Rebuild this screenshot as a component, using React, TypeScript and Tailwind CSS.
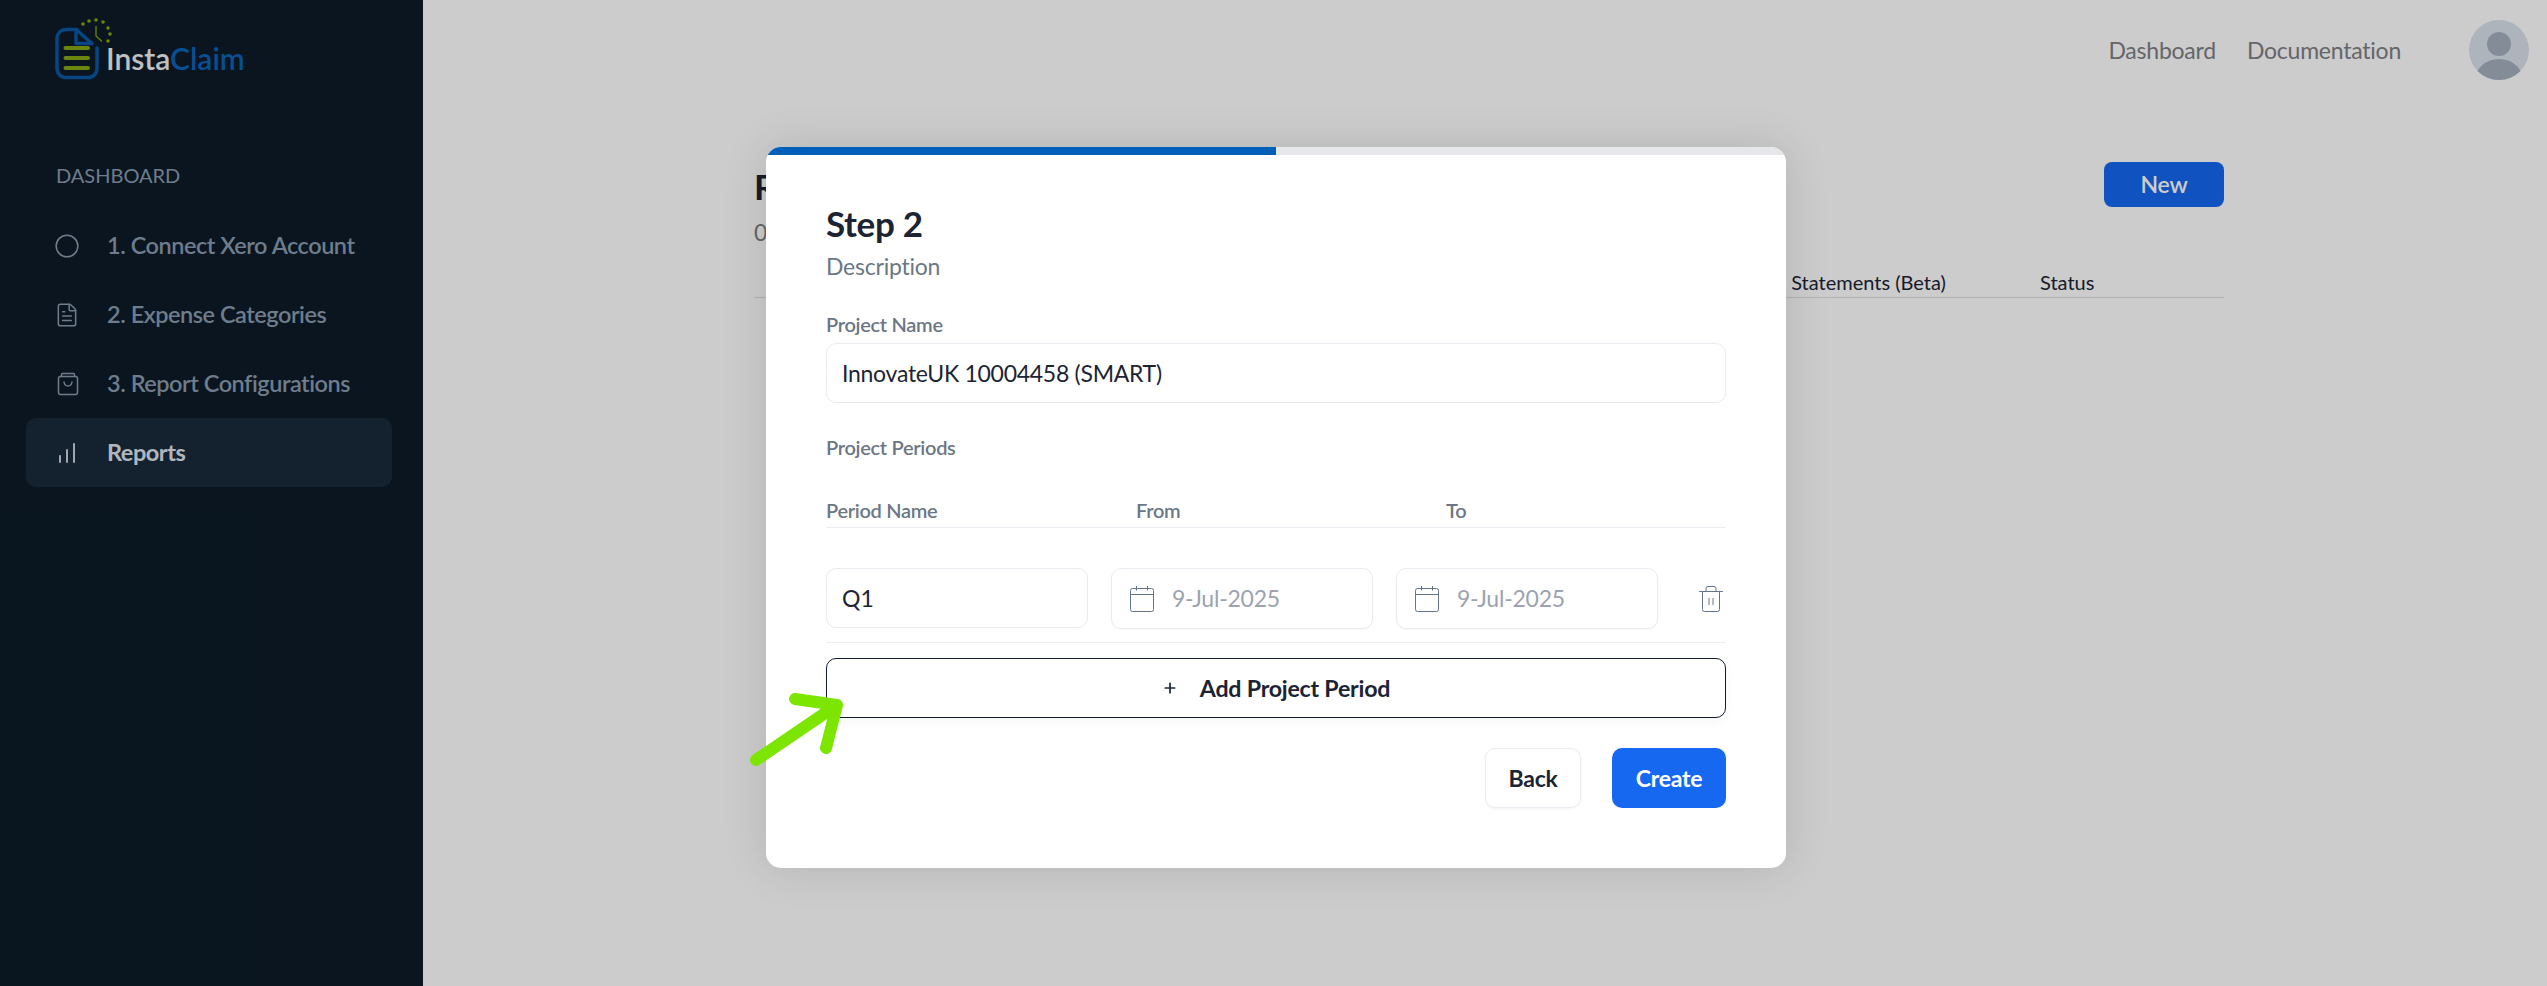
import { Circle, ChartNoAxesColumnIncreasing, FileText, Plus } from 'lucide-react';
import type { ReactNode } from 'react';

function Logo() {
  return (
    <div className="flex items-start">
      <svg width="64" height="70" viewBox="0 0 64 70" fill="none" className="shrink-0">
        <path
          d="M27 14.5H16a9 9 0 0 0-9 9V53a9 9 0 0 0 9 9.500H38a9 9 0 0 0 9-9.500V33"
          stroke="#0b57a4"
          strokeWidth="3.500"
          strokeLinecap="round"
        />
        <path d="M26 14.500 42 28.500H26Z" stroke="#0b57a4" strokeWidth="3.500" strokeLinejoin="round" />
        <path d="M15.500 33H38M15.500 43H38M15.500 53H38" stroke="#86a812" strokeWidth="4" strokeLinecap="round" />
        <g fill="#86a812">
          <circle cx="33" cy="9" r="1.800" />
          <circle cx="39" cy="6" r="1.800" />
          <circle cx="46" cy="5" r="1.800" />
          <circle cx="53" cy="7" r="1.800" />
          <circle cx="58" cy="13" r="1.800" />
          <circle cx="60" cy="19" r="1.800" />
          <circle cx="58" cy="26" r="1.800" />
        </g>
        <path d="M46 11V21L52 26.500" stroke="#86a812" strokeWidth="1.300" />
      </svg>
      <span className="-ml-[8px] mt-[25px] text-[30px] leading-[36px] font-semibold text-[#eef0f2]">
        Insta<span className="text-[#0b62b8]">Claim</span>
      </span>
    </div>
  );
}

function BagIcon() {
  return (
    <svg width="24" height="24" viewBox="0 0 24 24" fill="none" stroke="currentColor" strokeWidth="1.500">
      <rect x="2.500" y="4.500" width="19" height="18" rx="2" />
      <path d="M5 4.500 6 1.500H18L19 4.500" strokeLinejoin="round" />
      <path d="M8 10c.5 3 2.200 4 4 4s3.500-1 4-4" strokeLinecap="round" />
    </svg>
  );
}

function CalendarIcon() {
  return (
    <svg width="24" height="26" viewBox="0 0 24 26" fill="none" stroke="#64748b" strokeWidth="1" className="shrink-0">
      <rect x="0.500" y="2.500" width="23" height="23" rx="2" />
      <path d="M0.500 8.500H23.500M6.500 0V4.500M17.500 0V4.500" />
    </svg>
  );
}

function TrashIcon() {
  return (
    <svg
      width="24"
      height="26"
      viewBox="0 0 24 26"
      fill="none"
      stroke="#64748b"
      strokeWidth="1"
      className="mt-[18px] ml-[18px] shrink-0"
    >
      <path d="M0.500 5.500H23.500" strokeLinecap="round" />
      <path d="M7 5.500V2.500A2 2 0 0 1 9 0.500H15A2 2 0 0 1 17 2.500V5.500" />
      <path d="M3.500 5.500V23.500A2 2 0 0 0 5.500 25.500H18.500A2 2 0 0 0 20.500 23.500V5.500" />
      <path d="M10 12V19M14 12V19" />
    </svg>
  );
}

function NavItem({ icon, label, active }: { icon: ReactNode; label: string; active?: boolean }) {
  return (
    <div
      className={`mr-[31px] ml-[26px] flex h-[69px] items-center rounded-[10px] pl-[30px] text-[23.500px] tracking-[-0.02em] ${
        active ? 'bg-[#192b3b] font-bold text-[#dee4ee]' : 'font-semibold text-[#8a9bb0]'
      }`}
    >
      <span className="flex w-[51px] shrink-0 items-center">{icon}</span>
      {label}
    </div>
  );
}

function DateField() {
  return (
    <div className="flex h-[61px] w-[262px] shrink-0 items-center gap-[18px] rounded-[10px] border border-[#e8ebf0] pl-[18px] shadow-[0_1px_2px_rgba(0,0,0,0.03)]">
      <CalendarIcon />
      <input
        readOnly
        placeholder="9-Jul-2025"
        className="w-[150px] bg-transparent text-[23px] tracking-[-0.01em] outline-none placeholder:text-[#9ca3af]"
      />
    </div>
  );
}

function Modal() {
  return (
    <div className="w-[1020px] overflow-hidden rounded-[15px] bg-white shadow-[0_0_45px_rgba(0,0,0,0.12)]">
      <div className="h-[8px] bg-[#e5e7eb]">
        <div className="h-full w-1/2 bg-[#015eb9]" />
      </div>
      <div className="px-[60px] pt-[49px] pb-[60px] text-[#1c2434]">
        <h2 className="text-[35px] leading-[38px] font-bold tracking-[-0.01em]">Step 2</h2>
        <p className="mt-[11px] text-[23px] leading-[26px] tracking-[-0.01em] text-[#6b7785]">Description</p>

        <label className="mt-[32px] block text-[20px] leading-[26px] font-semibold tracking-[-0.015em] text-[#6b7785]">
          Project Name
        </label>
        <input
          readOnly
          defaultValue="InnovateUK 10004458 (SMART)"
          className="mt-[6px] h-[60px] w-full rounded-[10px] border border-[#e8ebf0] px-[15px] text-[23px] tracking-[-0.012em] outline-none"
        />

        <div className="mt-[31px] text-[20px] leading-[26px] font-semibold tracking-[-0.015em] text-[#6b7785]">
          Project Periods
        </div>

        <div className="mt-[37px] flex border-b border-[#e8ebf0] pb-[4px] text-[20px] leading-[26px] font-semibold tracking-[-0.015em] text-[#6b7785]">
          <span className="w-[310px]">Period Name</span>
          <span className="w-[310px]">From</span>
          <span>To</span>
        </div>

        <div className="mt-[40px] flex items-start gap-[23px] border-b border-[#eceef1] pb-[13px]">
          <input
            readOnly
            defaultValue="Q1"
            className="h-[60px] w-[262px] shrink-0 rounded-[10px] border border-[#e8ebf0] px-[15px] text-[23px] outline-none"
          />
          <DateField />
          <DateField />
          <TrashIcon />
        </div>

        <button className="mt-[15px] flex h-[60px] w-full items-center justify-center gap-[22px] rounded-[10px] border border-[#111c2c] text-[23.200px] font-bold tracking-[-0.01em] shadow-[0_4px_10px_rgba(0,0,0,0.04)]">
          <Plus size={16} strokeWidth={2.6} />
          Add Project Period
        </button>

        <div className="mt-[30px] flex justify-end gap-[31px]">
          <button className="h-[60px] w-[96px] rounded-[10px] border border-[#e8ebf0] text-[23px] font-bold tracking-[-0.01em] shadow-[0_1px_3px_rgba(0,0,0,0.05)]">
            Back
          </button>
          <button className="h-[60px] w-[114px] rounded-[10px] bg-[#1668f0] text-[23px] font-bold tracking-[-0.01em] text-white">
            Create
          </button>
        </div>
      </div>
    </div>
  );
}

export default function App() {
  return (
    <div className="relative flex h-screen w-full overflow-hidden bg-white [font-family:Lato,sans-serif]">
      <aside className="w-[423px] shrink-0 bg-[#0d1b27]">
        <div className="pt-[15px] pl-[50px]">
          <Logo />
        </div>
        <div className="mt-[76px] pl-[56px] text-[20px] leading-[28px] text-[#8a9bb0]">DASHBOARD</div>
        <nav className="mt-[22px]">
          <NavItem icon={<Circle size={26} strokeWidth={1.4} className="-ml-[2px]" />} label="1. Connect Xero Account" />
          <NavItem icon={<FileText size={26} strokeWidth={1.4} className="-ml-[2px]" />} label="2. Expense Categories" />
          <NavItem icon={<BagIcon />} label="3. Report Configurations" />
          <NavItem
            active
            icon={<ChartNoAxesColumnIncreasing size={24} strokeWidth={1.8} className="-ml-[1px]" />}
            label="Reports"
          />
        </nav>
      </aside>

      <main className="flex-1">
        <header className="flex h-[100px] items-center justify-end pr-[18px]">
          <nav className="flex gap-[31px] text-[23px] tracking-[-0.01em] text-[#7d8084]">
            <span>Dashboard</span>
            <span>Documentation</span>
          </nav>
          <svg width="60" height="60" viewBox="0 0 60 60" className="ml-[68px]">
            <defs>
              <clipPath id="avatar-clip">
                <circle cx="30" cy="30" r="30" />
              </clipPath>
            </defs>
            <g clipPath="url(#avatar-clip)">
              <rect width="60" height="60" fill="#dae1ec" />
              <circle cx="30" cy="24" r="12" fill="#a5b0bf" />
              <ellipse cx="30" cy="60" rx="24" ry="21" fill="#a5b0bf" />
            </g>
          </svg>
        </header>

        <section className="mt-[62px] ml-[331px] w-[1470px]">
          <div className="flex items-start justify-between">
            <div>
              <h1 className="text-[35px] leading-[49px] font-bold text-[#1c2434]">Reports</h1>
              <p className="mt-[8px] text-[23px] leading-[26px] text-[#7d8084]">0 reports</p>
            </div>
            <button className="h-[45px] w-[120px] rounded-[8px] bg-[#1467f0] text-[23px] font-semibold tracking-[-0.01em] text-white">
              New
            </button>
          </div>
          <div className="mt-[24px] flex border-b border-[#dde0e4] pb-[2px] text-[20px] leading-[26px] text-[#1c2434]">
            <span className="ml-[988px] w-[298px]">Bank Statements (Beta)</span>
            <span>Status</span>
          </div>
        </section>
      </main>

      {/* modal backdrop, dims the whole page */}
      <div className="absolute inset-0 flex items-start justify-center bg-black/20 pt-[147px] pl-[5px]">
        <Modal />
        <svg width="100" height="80" viewBox="0 0 100 80" fill="none" className="absolute top-[690px] left-[745px]">
          <path
            d="M11 70 92 15M50 9 92 15 81 58"
            stroke="#7ce600"
            strokeWidth="12"
            strokeLinecap="round"
            strokeLinejoin="round"
          />
        </svg>
      </div>
    </div>
  );
}
